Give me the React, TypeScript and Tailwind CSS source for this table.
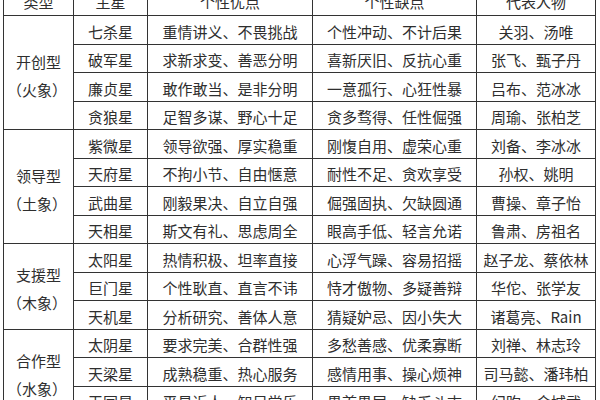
import React from "react";

type Row = [string, string, string, string];
type Group = { name: string; elem: string; rows: Row[] };

const groups: Group[] = [
  {
    name: "开创型",
    elem: "（火象）",
    rows: [
      ["七杀星", "重情讲义、不畏挑战", "个性冲动、不计后果", "关羽、汤唯"],
      ["破军星", "求新求变、善恶分明", "喜新厌旧、反抗心重", "张飞、甄子丹"],
      ["廉贞星", "敢作敢当、是非分明", "一意孤行、心狂性暴", "吕布、范冰冰"],
      ["贪狼星", "足智多谋、野心十足", "贪多骛得、任性倔强", "周瑜、张柏芝"],
    ],
  },
  {
    name: "领导型",
    elem: "（土象）",
    rows: [
      ["紫微星", "领导欲强、厚实稳重", "刚愎自用、虚荣心重", "刘备、李冰冰"],
      ["天府星", "不拘小节、自由惬意", "耐性不足、贪欢享受", "孙权、姚明"],
      ["武曲星", "刚毅果决、自立自强", "倔强固执、欠缺圆通", "曹操、章子怡"],
      ["天相星", "斯文有礼、思虑周全", "眼高手低、轻言允诺", "鲁肃、房祖名"],
    ],
  },
  {
    name: "支援型",
    elem: "（木象）",
    rows: [
      ["太阳星", "热情积极、坦率直接", "心浮气躁、容易招摇", "赵子龙、蔡依林"],
      ["巨门星", "个性耿直、直言不讳", "恃才傲物、多疑善辩", "华佗、张学友"],
      ["天机星", "分析研究、善体人意", "猜疑妒忌、因小失大", "诸葛亮、Rain"],
    ],
  },
  {
    name: "合作型",
    elem: "（水象）",
    rows: [
      ["太阴星", "要求完美、合群性强", "多愁善感、优柔寡断", "刘禅、林志玲"],
      ["天梁星", "成熟稳重、热心服务", "感情用事、操心烦神", "司马懿、潘玮柏"],
      ["天同星", "平易近人、知足常乐", "畏首畏尾、缺乏斗志", "纪昀、金城武"],
    ],
  },
];

const cell = "border border-[#333] text-center align-middle p-0 whitespace-nowrap";

export default function App() {
  return (
    <div
      className="w-[600px] h-[400px] overflow-hidden bg-white text-[#2e2e2e] text-[15px] leading-none"
      style={{ fontFamily: '"Noto Sans CJK SC", "Noto Sans", sans-serif' }}
    >
      <table className="border-collapse mt-[-14px] ml-[3px] table-fixed w-[592px]">
        <colgroup>
          <col className="w-[70px]" />
          <col className="w-[74px]" />
          <col className="w-[165px]" />
          <col className="w-[164px]" />
          <col className="w-[119px]" />
        </colgroup>
        <thead>
          <tr className="h-[29px]">
            <th className={`${cell} font-normal`}>类型</th>
            <th className={`${cell} font-normal`}>主星</th>
            <th className={`${cell} font-normal`}>个性优点</th>
            <th className={`${cell} font-normal`}>个性缺点</th>
            <th className={`${cell} font-normal`}>代表人物</th>
          </tr>
        </thead>
        <tbody>
          {groups.map((g) =>
            g.rows.map((r, i) => (
              <tr key={r[0]} className="h-[28.5px]">
                {i === 0 && (
                  <td rowSpan={g.rows.length} className={`${cell} leading-[28px] pt-[6px]`}>
                    <div>{g.name}</div>
                    <div className="-ml-[3px]">{g.elem}</div>
                  </td>
                )}
                <td className={`${cell} pt-[3px]`}>{r[0]}</td>
                <td className={`${cell} pt-[3px]`}>{r[1]}</td>
                <td className={`${cell} pt-[3px]`}>{r[2]}</td>
                <td className={`${cell} pt-[3px]`}>{r[3]}</td>
              </tr>
            ))
          )}
        </tbody>
      </table>
    </div>
  );
}
